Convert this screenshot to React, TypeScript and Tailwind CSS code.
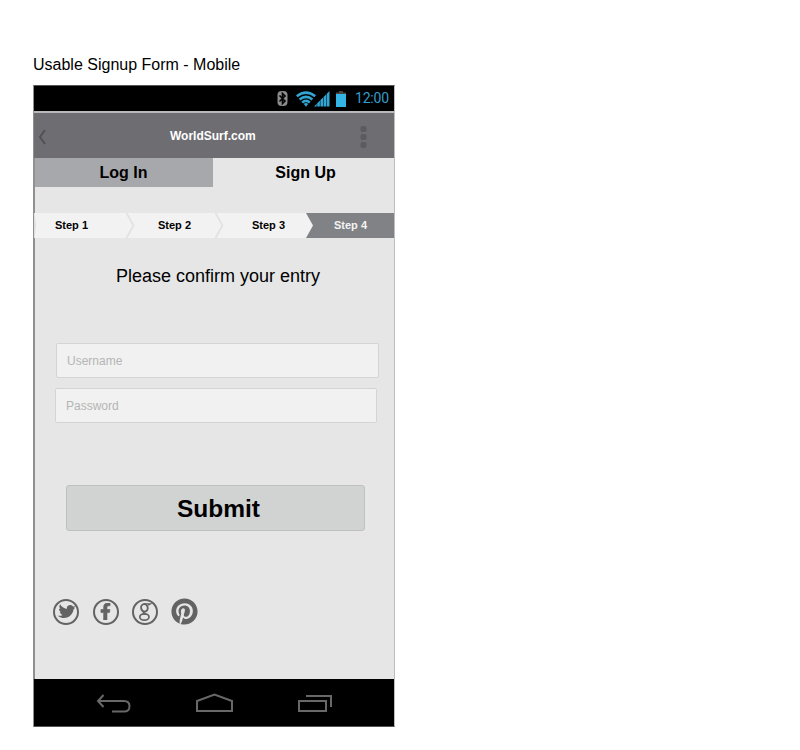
import { FaFacebookF, FaPinterest, FaTwitter } from "react-icons/fa";

function StatusBar() {
  return (
    <div className="flex h-[25px] shrink-0 items-center justify-end bg-black pr-[5px]">
      <svg width="11" height="15" viewBox="0 0 11 15" className="mr-[8px]">
        <rect x="0.5" width="10" height="15" rx="4" fill="#8c8c8c" />
        <path d="M2.5 4.5 8 10 5.5 12.5V2.5L8 5 2.5 10.5" fill="none" stroke="#050505" strokeWidth="1.6" />
      </svg>
      <svg width="20" height="16" viewBox="0 0 20 16" fill="none" stroke="#32a4d2" strokeWidth="2.6">
        <path d="M0.8 5.2Q10 -2 19.2 5.2M3.6 8.5Q10 3.3 16.4 8.5M6.2 11.6Q10 8 13.8 11.6" />
        <path d="M7.8 13Q10 11.2 12.2 13L10 15.8Z" fill="#32a4d2" stroke="none" />
      </svg>
      <svg width="16" height="16" viewBox="0 0 16 16" className="-ml-[2px] mr-[5px]" fill="#32a4d2">
        <path d="M0 15.5 2.7 12.8V15.5ZM3.2 12.3 5.9 9.6V15.5H3.2ZM6.4 9.1 9.1 6.4V15.5H6.4ZM9.6 5.9 12.3 3.2V15.5H9.6ZM12.8 2.7 15.5 0V15.5H12.8Z" />
      </svg>
      <svg width="12" height="16" viewBox="0 0 12 16" className="mr-[8px]">
        <path d="M4 0H8V1.5H11V3.5H1V1.5H4Z" fill="#4b4442" />
        <path d="M1 3H11V16H1Z" fill="#33b5e5" />
      </svg>
      <span className="w-[34px] whitespace-nowrap font-['Roboto',sans-serif] text-[14px] leading-[25px] tracking-[-0.2px] text-[#329dca]">12:00</span>
    </div>
  );
}

function Header() {
  return (
    <header className="flex h-[47px] shrink-0 items-center border-t-2 border-[#b9b9bb] bg-[#6e6d72] pl-[4px] pr-[27px]">
      <svg width="8" height="16" viewBox="0 0 8 16" fill="none" stroke="#515154" strokeWidth="2" className="mt-[2px]">
        <path d="M7 1 2 8 7 15" />
      </svg>
      <h1 className="ml-[124px] mt-[1px] flex-1 text-[12px] font-bold leading-4 text-white">WorldSurf.com</h1>
      <svg width="7" height="24" viewBox="0 0 7 24" fill="#5b5b60" className="mt-[2px]">
        <rect x="0.5" y="1" width="6" height="6" rx="2" />
        <rect x="0.5" y="9" width="6" height="6" rx="2" />
        <rect x="0.5" y="17" width="6" height="6" rx="2" />
      </svg>
    </header>
  );
}

function Divider({ start }: { start?: boolean }) {
  return (
    <svg width="9" height="25" viewBox="0 0 9 25" className="shrink-0">
      {start ? (
        <path d="M0 0H0.5L2 12.5 0.5 25H0Z" fill="#dededf" />
      ) : (
        <path d="M0.5 0 7.5 12.5 0.5 25" fill="none" stroke="#e2e2e4" strokeWidth="1.8" />
      )}
    </svg>
  );
}

function Steps() {
  return (
    <div className="mt-[26px] flex h-[25px] bg-[#f2f2f2] text-[11px] font-bold leading-[25px] text-black">
      <Divider start />
      <span className="w-[83px] pl-[12px]">Step 1</span>
      <Divider />
      <span className="w-[80px] pl-[23px]">Step 2</span>
      <Divider />
      <span className="w-[82px] pl-[28px]">Step 3</span>
      <svg width="8" height="25" viewBox="0 0 8 25" className="shrink-0">
        <path d="M0 0H8V25H0L7 12.5Z" fill="#818285" />
      </svg>
      <span className="flex-1 bg-[#818285] pl-[20px] text-[#f4f4f4]">Step 4</span>
    </div>
  );
}

function Social() {
  return (
    <div className="ml-[19px] mt-[67px] flex items-center gap-[13.5px] text-[#636363]">
      <span className="flex size-[26px] items-center justify-center rounded-full border-2 border-[#636363]">
        <FaTwitter size={17} className="rotate-[8deg]" />
      </span>
      <span className="flex size-[26px] items-center justify-center rounded-full border-2 border-[#636363]">
        <FaFacebookF size={17} className="stroke-[#636363] stroke-[20px]" />
      </span>
      <span className="flex size-[26px] items-center justify-center rounded-full border-2 border-[#636363]">
        <svg width="16" height="20" viewBox="0 0 16 20" fill="none" stroke="#636363" className="shrink-0">
          <ellipse cx="7.4" cy="5.8" rx="3.3" ry="3.8" strokeWidth="1.9" transform="rotate(-12 7.4 5.8)" />
          <path d="M7.5 1.8H13.5L11.2 3.2" strokeWidth="1.3" />
          <path d="M7.4 9.2C5.6 10.6 7 11.3 9 12.3" strokeWidth="1.8" />
          <ellipse cx="7.4" cy="15" rx="4.6" ry="3.2" strokeWidth="1.7" />
        </svg>
      </span>
      <FaPinterest size={27} className="-ml-[1px]" />
    </div>
  );
}

function NavBar() {
  return (
    <nav className="flex h-[47px] shrink-0 items-center bg-black pl-[62px]">
      <svg width="35" height="20" viewBox="0 0 35 20" fill="none" stroke="#686868" strokeWidth="2" className="mt-[2px]">
        <path d="M7.5 1 2 7 7.5 13M2 7H28Q33.5 7 33.5 12.3T28 17.5H16" />
      </svg>
      <svg width="37" height="20" viewBox="0 0 37 20" fill="none" stroke="#686868" strokeWidth="2" className="ml-[65px]">
        <path d="M1 18V8L18.5 1.5 36 8V18Z" />
      </svg>
      <svg width="36" height="20" viewBox="0 0 36 20" fill="none" stroke="#686868" strokeWidth="2" className="ml-[65px]">
        <path d="M1 8H28V18H1ZM8 3H33V14" />
      </svg>
    </nav>
  );
}

export default function App() {
  return (
    <main className="h-[750px] w-[800px] overflow-hidden bg-white pl-[33px] pt-[54px] font-['Liberation_Sans',Arial,sans-serif] text-black">
      <h2 className="h-[31px] text-[16px] leading-[21px]">Usable Signup Form - Mobile</h2>
      <section className="flex h-[642px] w-[362px] flex-col border-y border-l-2 border-r border-y-[#555] border-l-[#909092] border-r-[#bdbdbf] bg-[#e6e6e6]">
        <div className="-ml-[1px]">
          <StatusBar />
          <Header />
        </div>
        <div className="-ml-[1px] flex h-[29px] text-center text-[16px] font-bold leading-[27px]">
          <button className="w-[179px] border-l border-[#909092] bg-[#a7a8ab] pb-[1px] pr-[1px]">Log In</button>
          <button className="flex-1 pb-[1px] pl-[4px]">Sign Up</button>
        </div>
        <div className="-ml-[1px]">
          <Steps />
        </div>
        <p className="-ml-[1px] mt-[27px] pl-[8px] text-center text-[18px] leading-[22px]">Please confirm your entry</p>
        <form className="-ml-[1px] mt-[56px] flex flex-col">
          <input
            className="ml-[22px] h-[35px] w-[323px] rounded-[2px] border border-[#d4d4d4] bg-[#f1f1f1] px-[10px] text-[12px] placeholder:text-[#b5b5b5]"
            placeholder="Username"
          />
          <input
            type="password"
            className="ml-[21px] mt-[10px] h-[35px] w-[322px] rounded-[2px] border border-[#d4d4d4] bg-[#f1f1f1] px-[10px] text-[12px] placeholder:text-[#b5b5b5]"
            placeholder="Password"
          />
          <button
            type="button"
            className="ml-[32px] mt-[62px] h-[46px] w-[299px] rounded-[3px] border border-[#bfc0c0] bg-[#d1d3d2] pl-[6px] pt-[3px] text-[24.5px] font-bold leading-none"
          >
            Submit
          </button>
        </form>
        <div className="-ml-[1px]">
          <Social />
        </div>
        <div className="flex-1" />
        <div className="-ml-[1px]">
          <NavBar />
        </div>
      </section>
    </main>
  );
}
